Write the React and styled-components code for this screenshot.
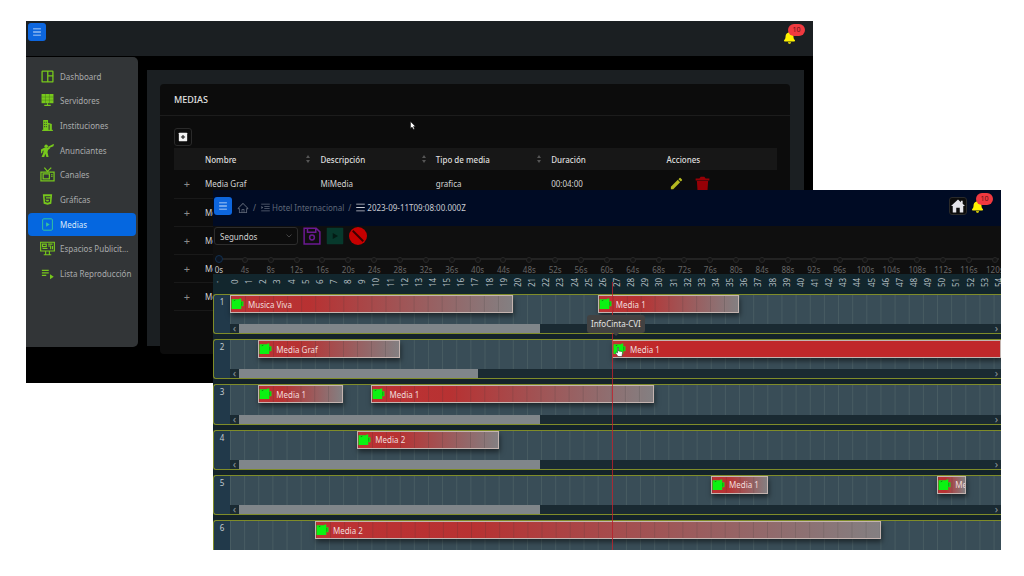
import React, { useState } from 'react'
import styled, { createGlobalStyle } from 'styled-components'
import { MdPlaylistPlay, MdEdit } from 'react-icons/md'
import { FaBell } from 'react-icons/fa'
import { AiFillHtml5, AiOutlineHome, AiOutlineMenu, AiOutlineMenuUnfold } from 'react-icons/ai'

const UNITS = 54.5

const rows = [
    { id: 1, thumb: 39, clips: [{ name: 'Musica Viva', start: 0, length: 20 }, { name: 'Media 1', start: 26, length: 10 }] },
    { id: 2, thumb: 31, clips: [{ name: 'Media Graf', start: 2, length: 10 }, { name: 'Media 1', start: 27, length: 27.5, open: true }] },
    { id: 3, thumb: 39, clips: [{ name: 'Media 1', start: 2, length: 6 }, { name: 'Media 1', start: 10, length: 20 }] },
    { id: 4, thumb: 39, clips: [{ name: 'Media 2', start: 9, length: 10 }] },
    { id: 5, thumb: 39, clips: [{ name: 'Media 1', start: 34, length: 4 }, { name: 'Media 1', start: 50, length: 2 }] },
    { id: 6, clips: [{ name: 'Media 2', start: 6, length: 40 }] },
]

const medias = [
    ['Media Graf', 'MiMedia', 'grafica', '00:04:00'],
    ['Media 1', 'Media 1', 'video', '00:03:00'],
    ['Media 2', 'Media 2', 'video', '00:05:00'],
    ['Media 3', 'Media 3', 'video', '00:02:00'],
    ['Media 4', 'Media 4', 'video', '00:01:00'],
]

const marks = Array.from({ length: 31 }, (_, i) => `${i * 4}s`)
const ticks = Array.from({ length: 55 }, (_, i) => i)

const DashboardIcon = () => (
    <svg viewBox="0 0 24 24" fill="none" stroke="currentColor" strokeWidth="2.4">
        <rect x="2" y="2" width="20" height="20" rx="1" />
        <path d="M12.500 2v20M12.500 11h10" />
    </svg>
)

const ServerIcon = () => (
    <svg viewBox="0 0 24 24" fill="currentColor">
        <path d="M1 0h22v17H1z" />
        <path d="M11 17h2v3h5v2H6v-2h5z" />
        <path d="M1 5.6h22M1 11.3h22M8.3 0v17M15.6 0v17" stroke="#45721b" strokeWidth="0.8" />
    </svg>
)

const BuildingIcon = () => (
    <svg viewBox="0 0 24 24" fill="currentColor">
        <path fillRule="evenodd" d="M4 22V2h9v5l7 2v13h-4V10h-2v12zM6 5h1.500v2H6zm3 0h1.500v2H9zm-3 4h1.500v2H6zm3 0h1.500v2H9zm-3 4h1.500v2H6zm3 0h1.500v2H9z" />
        <path d="M2 20h20v2H2z" />
    </svg>
)

const SpeakerIcon = () => (
    <svg viewBox="0 0 24 24" fill="currentColor">
        <circle cx="9.500" cy="4" r="3.200" />
        <path d="M13 5l8-4 3-1-1 4-9 4z" />
        <path d="M0 10l6-3h6l4-1 1 2-4 3-1 4 2 9h-4l-2-6-2 6H1l3-7 1-5-2 1-1 4H0z" />
    </svg>
)

const TvIcon = () => (
    <svg viewBox="0 0 24 24" fill="none" stroke="currentColor" strokeWidth="2">
        <path d="M1.500 8h21v14h-21zM7 1l5 6 6-6" />
        <path d="M5 11h10v8H5zM18 12h2M18 15h2" />
    </svg>
)

const FilePlayIcon = () => (
    <svg viewBox="0 0 24 24">
        <rect x="3" y="1.500" width="18" height="21" rx="2" fill="none" stroke="currentColor" strokeWidth="1.800" />
        <path d="M9.500 8l6.500 4-6.500 4z" fill="currentColor" />
    </svg>
)

const BillboardIcon = () => (
    <svg viewBox="0 0 24 24" fill="none" stroke="currentColor" strokeWidth="1.800">
        <path d="M1 2h22v14H1zM4 5h6v4H4zM13 5h7M13 8h4v5M4 12h8M20 8v5" />
        <path d="M9 16v5M15 16v5M6 22h12" />
    </svg>
)

const PlusBoxIcon = () => (
    <svg viewBox="0 0 24 24">
        <rect x="2" y="2" width="20" height="20" rx="1" fill="#f2f2f2" />
        <path d="M12 7v10M7 12h10" stroke="#111" strokeWidth="2.500" />
    </svg>
)

const TrashIcon = () => (
    <svg viewBox="0 0 24 24" fill="currentColor">
        <path d="M1 4h6l2-3h6l2 3h6v3H1zM3 8h18l-1 15H4z" />
    </svg>
)

const HouseIcon = () => (
    <svg viewBox="0 0 24 24" fill="currentColor">
        <path d="M12 1L0 12h3v11h6v-8h6v8h6V12h3l-4-4V3h-3v2.500z" />
    </svg>
)

const SaveIcon = () => (
    <svg viewBox="0 0 24 24" fill="none" stroke="currentColor" strokeWidth="2">
        <path d="M1.500 1.500h16l5 5v16h-21zM6 2v5h11V2" />
        <circle cx="12" cy="14" r="3.200" />
    </svg>
)

const PlayIcon = () => (
    <svg viewBox="0 0 24 24">
        <rect x="1" y="1" width="22" height="22" rx="1" fill="#07392c" />
        <path d="M9 8l7 4-7 4z" fill="#031b14" />
    </svg>
)

const StopIcon = () => (
    <svg viewBox="0 0 24 24">
        <circle cx="12" cy="12" r="12" fill="#c60000" />
        <path d="M5 5l14 14" stroke="#3c0000" strokeWidth="2.500" />
    </svg>
)

const PluginIcon = () => (
    <svg viewBox="0 0 24 22">
        <path d="M1 2h14l1-1h3v6l2-1h2v9h-2l-2-1v6H1z" fill="#0bf312" />
        <path d="M20 7v7M5 5l3-1" stroke="#07840c" strokeWidth="1.500" />
    </svg>
)

const menu = [
    { label: 'Dashboard', icon: <DashboardIcon /> },
    { label: 'Servidores', icon: <ServerIcon /> },
    { label: 'Instituciones', icon: <BuildingIcon /> },
    { label: 'Anunciantes', icon: <SpeakerIcon /> },
    { label: 'Canales', icon: <TvIcon />, wide: true },
    { label: 'Gráficas', icon: <AiFillHtml5 /> },
    { label: 'Medias', icon: <FilePlayIcon />, active: true },
    { label: 'Espacios Publicit...', icon: <BillboardIcon />, wide: true },
    { label: 'Lista Reproducción', icon: <MdPlaylistPlay />, wide: true },
]

function Alerts() {
    return (
        <Bell type="button" aria-label="Notificaciones">
            <FaBell />
            <Badge>10</Badge>
        </Bell>
    )
}

function MediasWindow() {
    return (
        <BackWindow>
            <TopBar>
                <MenuButton type="button" aria-label="Menú"><AiOutlineMenu /></MenuButton>
                <Alerts />
            </TopBar>
            <Body>
                <Sidebar>
                    <MenuList>
                        {menu.map((item) => (
                            <li key={item.label}>
                                <MenuLink href="#" $active={item.active}>
                                    <MenuIcon $wide={item.wide} $active={item.active}>{item.icon}</MenuIcon>
                                    {item.label}
                                </MenuLink>
                            </li>
                        ))}
                    </MenuList>
                </Sidebar>
                <Main>
                    <Card>
                        <CardTitle>MEDIAS</CardTitle>
                        <CardBody>
                            <SquareButton type="button" aria-label="Agregar media" $icon={10}><PlusBoxIcon /></SquareButton>
                            <Table>
                                <thead>
                                    <tr>
                                        <ExpandHead aria-label="Detalle" />
                                        {['Nombre', 'Descripción', 'Tipo de media', 'Duración', 'Acciones'].map((title, i) => (
                                            <th key={title}>
                                                <HeadCell>{title}{i < 3 && <Sorter />}</HeadCell>
                                            </th>
                                        ))}
                                    </tr>
                                </thead>
                                <tbody>
                                    {medias.map((media) => (
                                        <tr key={media[0]}>
                                            <td><Expand type="button" aria-label="Expandir">+</Expand></td>
                                            {media.map((value, i) => <td key={i}>{value}</td>)}
                                            <td>
                                                <Actions>
                                                    <Action type="button" aria-label="Editar" $color="#b5b920"><MdEdit /></Action>
                                                    <Action type="button" aria-label="Eliminar" $color="#960006"><TrashIcon /></Action>
                                                </Actions>
                                            </td>
                                        </tr>
                                    ))}
                                </tbody>
                            </Table>
                        </CardBody>
                    </Card>
                </Main>
            </Body>
            <Pointer viewBox="0 0 12 18"><path d="M1 1v14l3-3 3 5 2-1-2-5h4z" fill="#fff" stroke="#111" /></Pointer>
        </BackWindow>
    )
}

function TimelineWindow() {
    const [second, setSecond] = useState(0)

    return (
        <FrontWindow>
            <NavBar>
                <MenuButton type="button" aria-label="Menú"><AiOutlineMenu /></MenuButton>
                <Crumbs aria-label="Ruta">
                    <Crumb href="#" aria-label="Inicio"><AiOutlineHome size={12} /></Crumb>
                    <span>/</span>
                    <Crumb href="#"><AiOutlineMenuUnfold size={11} />Hotel Internacional</Crumb>
                    <span>/</span>
                    <Crumb href="#" $current><AiOutlineMenu size={11} />2023-09-11T09:08:00.000Z</Crumb>
                </Crumbs>
                <SquareButton type="button" aria-label="Inicio" $icon={14}><HouseIcon /></SquareButton>
                <Alerts />
            </NavBar>
            <Toolbar>
                <SelectBox>
                    <select aria-label="Unidad de tiempo" defaultValue="Segundos">
                        <option>Segundos</option>
                        <option>Minutos</option>
                    </select>
                    <svg viewBox="0 0 12 8"><path d="M1 1l5 5 5-5" fill="none" stroke="#555" strokeWidth="1.500" /></svg>
                </SelectBox>
                <Tool type="button" aria-label="Guardar" $color="#6b1a92"><SaveIcon /></Tool>
                <Tool type="button" aria-label="Reproducir"><PlayIcon /></Tool>
                <Tool type="button" aria-label="Cancelar"><StopIcon /></Tool>
            </Toolbar>
            <SliderBox>
                <Slider
                    type="range"
                    min="0"
                    max="120"
                    step="4"
                    aria-label="Tiempo"
                    value={second}
                    onChange={(e) => setSecond(Number(e.target.value))}
                />
                <Marks>
                    {marks.map((mark, i) => <Mark key={mark} $on={i * 4 === second}>{mark}</Mark>)}
                </Marks>
            </SliderBox>
            <Timeline>
                <Ruler>
                    <Tick>·</Tick>
                    <Lane>
                        {ticks.map((tick) => <Tick key={tick}>{tick}</Tick>)}
                    </Lane>
                </Ruler>
                <Rows>
                    {rows.map((row) => (
                        <Row key={row.id}>
                            <RowLabel>{row.id}</RowLabel>
                            <Track>
                                <ClipLane>
                                    {row.clips.map((clip) => (
                                        <Clip key={clip.start} $start={clip.start} $length={clip.length} $open={clip.open}>
                                            <PluginIcon />
                                            {clip.name}
                                        </Clip>
                                    ))}
                                </ClipLane>
                                {row.thumb && (
                                    <ScrollBar>
                                        <Arrow>‹</Arrow>
                                        <Thumb $width={row.thumb} />
                                        <Arrow>›</Arrow>
                                    </ScrollBar>
                                )}
                            </Track>
                        </Row>
                    ))}
                </Rows>
                <Cursor>
                    <Tooltip role="tooltip">InfoCinta-CVI</Tooltip>
                    <Hand viewBox="0 0 16 20">
                        <path d="M5 1h2v7l6 1 2 2-1 8H6l-5-7 1-2 3 2z" fill="#fff" stroke="#222" />
                    </Hand>
                </Cursor>
            </Timeline>
        </FrontWindow>
    )
}

function App() {
    return (
        <Desktop>
            <GlobalStyle />
            <MediasWindow />
            <TimelineWindow />
        </Desktop>
    )
}

export default App

const GlobalStyle = createGlobalStyle`
    * {
        box-sizing: border-box;
    }

    body {
        margin: 0;
        background: #fff;
        font-family: "Noto Sans", "Open Sans", sans-serif;
        font-size: 8px;
    }

    button, select, input {
        font: inherit;
        margin: 0;
        padding: 0;
    }

    a {
        color: inherit;
        text-decoration: none;
    }

    svg {
        display: block;
        flex: none;
    }
`

const Desktop = styled.div`
    position: relative;
    height: 100vh;
    min-height: 480px;
    overflow: hidden;
`

const Window = styled.section`
    position: absolute;
    display: flex;
    flex-direction: column;
    overflow: hidden;
`

const BackWindow = styled(Window)`
    top: 21px;
    left: 26px;
    right: 211px;
    bottom: 193px;
    background: #000;
`

const FrontWindow = styled(Window)`
    top: 190px;
    left: 213px;
    right: 23px;
    bottom: 26px;
    background: #0f0f0f;
`

const TopBar = styled.header`
    display: flex;
    justify-content: space-between;
    height: 35px;
    padding: 2px 13px 0 2px;
    background: #1b1f22;
`

const MenuButton = styled.button`
    display: flex;
    align-items: center;
    justify-content: center;
    width: 18px;
    height: 18px;
    border: 0;
    border-radius: 3px;
    background: #0d66de;
    color: #d6e6fb;
    cursor: pointer;

    svg {
        width: 10px;
        height: 10px;
    }
`

const Bell = styled.button`
    position: relative;
    display: flex;
    align-items: flex-end;
    width: 16px;
    height: 21px;
    border: 0;
    background: none;
    color: #fff200;
    cursor: pointer;

    svg {
        width: 11px;
        height: 13px;
    }
`

const Badge = styled.span`
    position: absolute;
    top: 1px;
    left: 4px;
    width: 17px;
    height: 12px;
    border-radius: 6px;
    background: #f0393f;
    color: #5c1216;
    font-size: 7px;
    line-height: 12px;
    text-align: center;
`

const Body = styled.div`
    display: flex;
    flex: 1;
    min-height: 0;
    padding-top: 1px;
`

const Sidebar = styled.nav`
    flex: none;
    width: 112px;
    margin-bottom: 36px;
    padding: 8px 2px;
    border-radius: 0 5px 5px 0;
    background: #323537;
`

const MenuList = styled.ul`
    display: grid;
    grid-template-columns: minmax(0, 1fr);
    grid-auto-rows: 1fr;
    gap: 2px;
    height: 220px;
    margin: 0;
    padding: 0;
    list-style: none;
`

const MenuLink = styled.a`
    display: flex;
    align-items: center;
    gap: 5px;
    height: 100%;
    padding-left: 12px;
    border-radius: 4px;
    background: ${(p) => (p.$active ? '#0567e0' : 'none')};
    color: ${(p) => (p.$active ? '#d9e8fa' : '#a9abac')};
    white-space: nowrap;
`

const MenuIcon = styled.span`
    display: flex;
    flex: none;
    justify-content: center;
    width: 15px;
    color: ${(p) => (p.$active ? '#35c49c' : '#77c81c')};

    svg {
        width: ${(p) => (p.$wide ? 15 : 13)}px;
        height: ${(p) => (p.$wide ? 15 : 13)}px;
    }
`

const Main = styled.main`
    flex: 1;
    min-width: 0;
    margin: 13px 9px 37px 9px;
    padding: 14px 14px 0 13px;
    background: #1b1f22;
`

const Card = styled.article`
    height: 270px;
    border-radius: 4px;
    background: #0c0c0c;
    color: #d4d4d4;
`

const CardTitle = styled.h1`
    margin: 0;
    padding: 0 14px;
    border-bottom: 1px solid #1c1c1c;
    color: #e2e2e2;
    font-size: 9px;
    font-weight: 500;
    line-height: 31px;
`

const CardBody = styled.div`
    padding: 12px 13px 0 14px;
`

const SquareButton = styled.button`
    display: flex;
    align-items: center;
    justify-content: center;
    width: 18px;
    height: 18px;
    border: 1px solid #2a2a2a;
    border-radius: 3px;
    background: #0c0c0c;
    color: #e4e4ea;
    cursor: pointer;

    svg {
        width: ${(p) => p.$icon}px;
        height: ${(p) => p.$icon}px;
    }
`

const Table = styled.table`
    width: 100%;
    margin-top: 2px;
    border-collapse: collapse;
    table-layout: fixed;

    th {
        height: 22px;
        padding: 0 0 0 5px;
        background: #171717;
        color: #dedede;
        font-weight: 500;
        text-align: left;
    }

    td {
        height: 28px;
        padding: 0 0 0 5px;
        border-bottom: 1px solid #191919;
    }
`

const ExpandHead = styled.th`
    width: 26px;
`

const HeadCell = styled.span`
    display: flex;
    align-items: center;
    justify-content: space-between;
    padding-right: 5px;
`

const Sorter = styled.span`
    display: grid;
    gap: 2px;

    &:before,
    &:after {
        content: "";
        border: 2px solid transparent;
    }

    &:before {
        border-top: 0;
        border-bottom: 3px solid #565656;
    }

    &:after {
        border-bottom: 0;
        border-top: 3px solid #565656;
    }
`

const Expand = styled.button`
    display: block;
    width: 16px;
    border: 0;
    background: none;
    color: #8a8a8a;
    font-size: 11px;
    line-height: 11px;
`

const Actions = styled.div`
    display: flex;
    gap: 11px;
    padding-left: 2px;
`

const Action = styled.button`
    border: 0;
    background: none;
    color: ${(p) => p.$color};
    cursor: pointer;

    svg {
        width: 15px;
        height: 15px;
    }
`

const Pointer = styled.svg`
    position: absolute;
    top: 100px;
    left: 384px;
    width: 6px;
    height: 9px;
`

const NavBar = styled.header`
    display: flex;
    align-items: center;
    gap: 5px;
    height: 36px;
    padding: 0 13px 5px 1px;
    background: #000b24;

    & > ${Bell} {
        margin-bottom: 6px;
    }
`

const Crumbs = styled.nav`
    display: flex;
    flex: 1;
    align-items: center;
    gap: 4px;
    padding-top: 4px;
    color: #6a7180;
`

const Crumb = styled.a`
    display: flex;
    align-items: center;
    gap: 1px;
    color: ${(p) => (p.$current ? '#c9ccd3' : '#5f6878')};
    white-space: nowrap;
`

const Toolbar = styled.div`
    display: flex;
    align-items: center;
    gap: 5px;
    height: 22px;
    padding: 0 1px 2px;
`

const SelectBox = styled.label`
    position: relative;
    width: 84px;

    select {
        appearance: none;
        width: 100%;
        height: 18px;
        padding: 0 5px;
        border: 1px solid #2c2c2c;
        border-radius: 3px;
        background: #0c0c0c;
        color: #d0d0d0;
    }

    svg {
        position: absolute;
        top: 7px;
        right: 6px;
        width: 6px;
        height: 4px;
        pointer-events: none;
    }
`

const Tool = styled.button`
    border: 0;
    background: none;
    color: ${(p) => p.$color};
    cursor: pointer;

    svg {
        width: 18px;
        height: 18px;
    }
`

const SliderBox = styled.div`
    display: grid;
    height: 26px;
    padding: 7px 2px 0;
`

const Slider = styled.input`
    grid-area: 1 / 1;
    appearance: none;
    width: 100%;
    height: 8px;
    background: linear-gradient(#232323, #232323) center / 100% 2px no-repeat;

    &::-webkit-slider-thumb {
        appearance: none;
        width: 8px;
        height: 8px;
        border: 1px solid #12304f;
        border-radius: 50%;
        background: #0c1420;
    }
`

const Marks = styled.div`
    display: flex;
    grid-area: 1 / 1;
    justify-content: space-between;
    padding: 2px 4px 0;
    pointer-events: none;
`

const Mark = styled.span`
    display: flex;
    flex-direction: column;
    align-items: center;
    gap: 2px;
    width: 0;
    color: ${(p) => (p.$on ? '#c8c8c8' : '#666')};
    line-height: 10px;

    &:before {
        content: "";
        width: 4px;
        height: 4px;
        border: 1px solid ${(p) => (p.$on ? 'transparent' : '#272727')};
        border-radius: 50%;
        background: ${(p) => (p.$on ? 'none' : '#141414')};
    }
`

const Timeline = styled.div`
    position: relative;
    display: flex;
    flex: 1;
    flex-direction: column;
    min-height: 0;
    background: #14232a;
`

const Lane = styled.div`
    display: grid;
    grid-template-columns: repeat(${UNITS * 2}, minmax(0, 1fr));
`

const Ruler = styled.div`
    display: grid;
    grid-template-columns: 17px 1fr;
    height: 20px;
    padding-bottom: 4px;
    background: #12262d;
`

const Tick = styled.span`
    grid-column: span 2;
    color: #b4bec2;
    line-height: 10px;
    text-align: center;
    writing-mode: vertical-rl;
    transform: rotate(180deg);

    ${Ruler} > & {
        grid-column: span 1;
    }

    ${Lane} > &:last-child {
        grid-column: span 1;
    }
`

const Rows = styled.div`
    display: grid;
    flex: 1;
    grid-template-rows: repeat(5, minmax(0, 1fr)) 30px;
    gap: 5px;
    min-height: 0;
`

const Row = styled.div`
    display: grid;
    grid-template-columns: 16px 1fr;
    border: 1px solid #7f8c29;
    border-right: 0;
    border-radius: 3px 0 0 3px;
    background: #21394a;
    overflow: hidden;

    &:last-child {
        border-bottom: 0;
        border-radius: 3px 0 0 0;
    }
`

const RowLabel = styled.span`
    color: #c2cbd0;
    line-height: 14px;
    text-align: center;
`

const Track = styled.div`
    display: flex;
    flex-direction: column;
    min-width: 0;
`

const ClipLane = styled(Lane)`
    flex: 1;
    align-items: start;
    background: linear-gradient(90deg, #485c62 1px, transparent 1px) 0 0 / calc(100% / ${UNITS}) 100%, #394d57;
`

const Clip = styled.div`
    display: flex;
    grid-column: ${(p) => p.$start * 2 + 1} / span ${(p) => p.$length * 2};
    align-items: center;
    gap: 4px;
    height: 18px;
    border: 1px solid #c4b4b0;
    background:
        linear-gradient(90deg, rgba(50, 50, 50, ${(p) => (p.$open ? 0 : 0.2)}) 1px, transparent 1px) 0 0 / calc(100% / ${(p) => p.$length}) 100%,
        linear-gradient(90deg, #bd3234, ${(p) => (p.$open ? '#c0282a 10%' : 'rgba(190, 48, 48, 0.95) 28%, rgba(150, 140, 140, 0.8)')});
    box-shadow: 1px 3px 5px rgba(0, 0, 0, 0.5);
    color: #f0dcdc;
    overflow: hidden;
    white-space: nowrap;

    svg {
        width: 13px;
        height: 12px;
    }
`

const ScrollBar = styled.div`
    display: flex;
    justify-content: space-between;
    height: 9px;
    background: #1a2a32;
`

const Arrow = styled.span`
    width: 9px;
    color: #8a9498;
    font-size: 11px;
    line-height: 7px;
    text-align: center;
`

const Thumb = styled.span`
    width: ${(p) => p.$width}%;
    margin-right: auto;
    background: #80868a;
`

const Cursor = styled.div`
    position: absolute;
    top: 8px;
    bottom: 0;
    left: calc(17px + (100% - 17px) * ${27 / UNITS});
    width: 1px;
    background: rgba(190, 32, 42, 0.8);
`

const Tooltip = styled.div`
    position: absolute;
    top: 33px;
    left: -25px;
    padding: 0 4px;
    border-radius: 3px;
    background: #424242;
    color: #e4e4e4;
    line-height: 18px;
    white-space: nowrap;

    &:after {
        content: "";
        position: absolute;
        top: 100%;
        left: 50%;
        margin-left: -3px;
        border: 3px solid transparent;
        border-top-color: #424242;
        border-bottom: 0;
    }
`

const Hand = styled.svg`
    position: absolute;
    top: 65px;
    left: 3px;
    width: 8px;
    height: 10px;
`
